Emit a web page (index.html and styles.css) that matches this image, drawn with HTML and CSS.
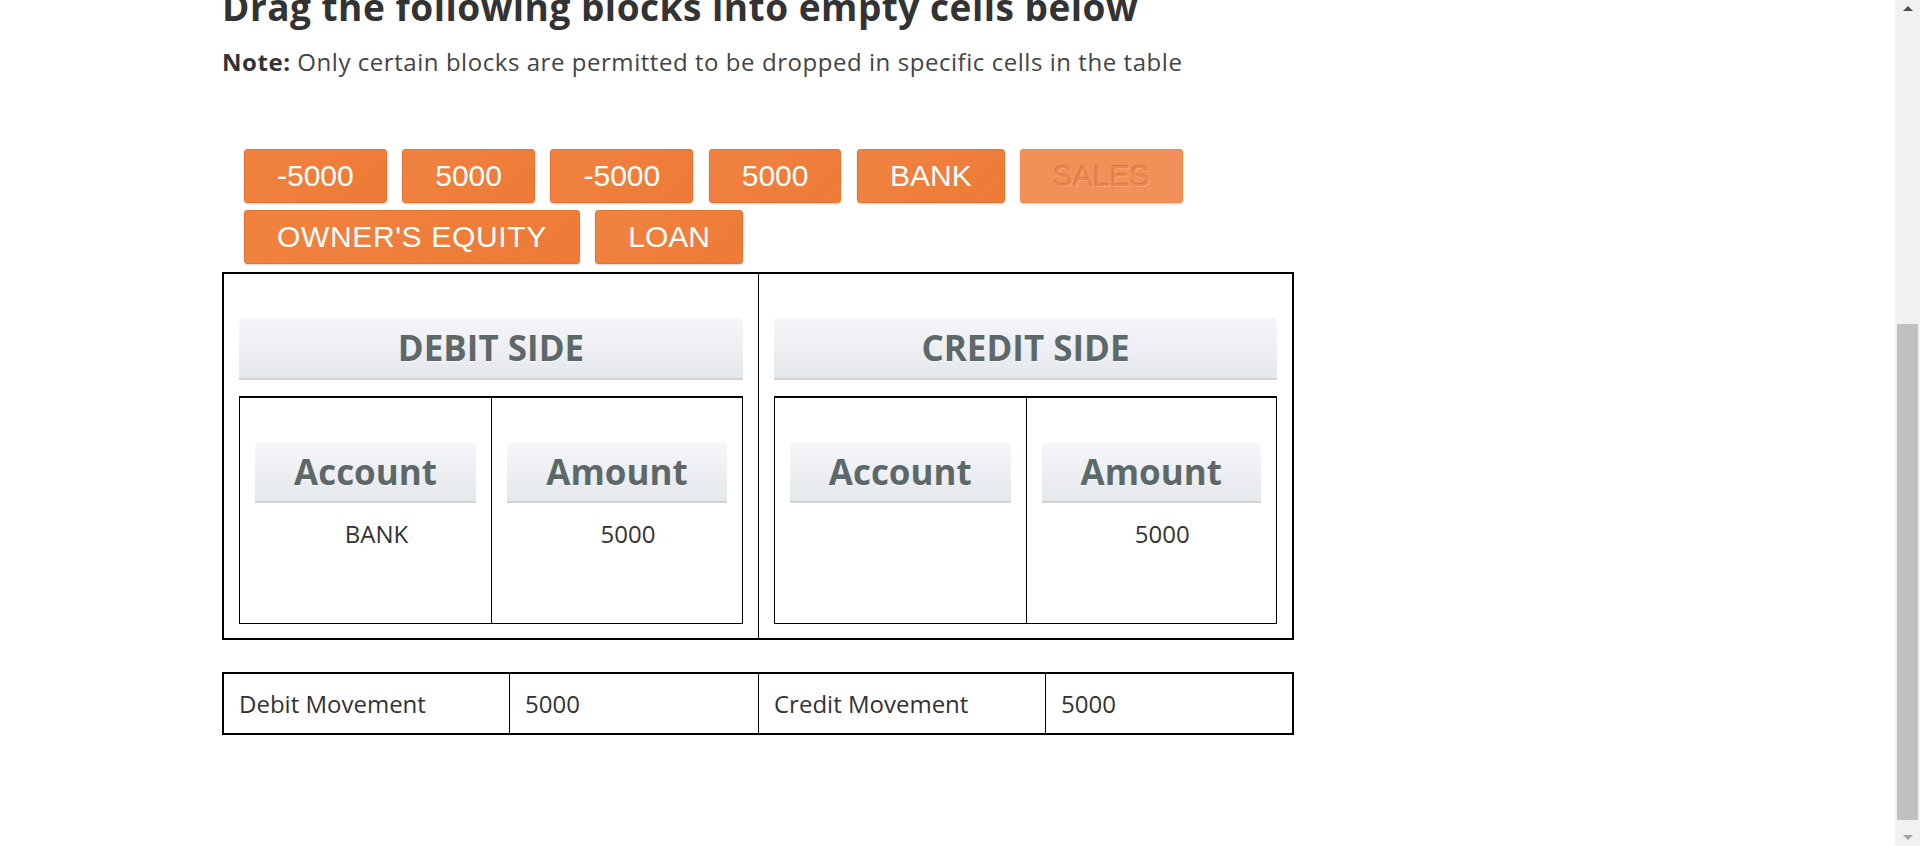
FILE: index.html
```html
<!DOCTYPE html>
<html lang="en">
<head>
<meta charset="utf-8">
<title>Drag and drop – ledger activity</title>
<link rel="stylesheet" href="styles.css">
</head>
<body>
<main class="activity">
  <h2 class="task-title">Drag the following blocks into empty cells below</h2>
  <p class="task-note"><strong>Note:</strong> Only certain blocks are permitted to be dropped in specific cells in the table</p>

  <div class="blocks">
    <span class="block">-5000</span>
    <span class="block">5000</span>
    <span class="block">-5000</span>
    <span class="block">5000</span>
    <span class="block">BANK</span>
    <span class="block block-used">SALES</span>
    <span class="block block-long">OWNER'S EQUITY</span>
    <span class="block">LOAN</span>
  </div>

  <div class="ledger">
    <div class="ledger-side">
      <h3 class="side-title">DEBIT SIDE</h3>
      <div class="entries">
        <div class="entry-col">
          <h4 class="col-title">Account</h4>
          <div class="drop">BANK</div>
        </div>
        <div class="entry-col">
          <h4 class="col-title">Amount</h4>
          <div class="drop">5000</div>
        </div>
      </div>
    </div>
    <div class="ledger-side">
      <h3 class="side-title">CREDIT SIDE</h3>
      <div class="entries">
        <div class="entry-col">
          <h4 class="col-title">Account</h4>
          <div class="drop"></div>
        </div>
        <div class="entry-col">
          <h4 class="col-title">Amount</h4>
          <div class="drop">5000</div>
        </div>
      </div>
    </div>
  </div>

  <div class="totals">
    <div class="total-cell">Debit Movement</div>
    <div class="total-cell">5000</div>
    <div class="total-cell">Credit Movement</div>
    <div class="total-cell">5000</div>
  </div>
</main>

<div class="scrollbar" aria-hidden="true">
  <div class="scroll-btn scroll-up"></div>
  <div class="scroll-track"><div class="scroll-thumb"></div></div>
  <div class="scroll-btn scroll-down"></div>
</div>

<script src="script.js"></script>
</body>
</html>
```

FILE: styles.css
```css
html, body {
  margin: 0;
  padding: 0;
}

body {
  font-family: "Open Sans", "Liberation Sans", sans-serif;
  color: #333;
  background: #fff;
}

.activity {
  width: 1072px;
  padding: 511px 0 126px 222px;
}

.task-title {
  margin: 0;
  font-size: 37px;
  line-height: 40px;
  letter-spacing: 0.5px;
  font-weight: 700;
  color: #333;
}

.task-note {
  margin: 18px 0 0;
  font-size: 24px;
  line-height: 34px;
  letter-spacing: 0.55px;
  color: #444;
}

.task-note strong {
  color: #333;
  font-weight: 700;
}

.blocks {
  display: flex;
  flex-wrap: wrap;
  column-gap: 15.5px;
  row-gap: 7px;
  margin: 70px 0 0 22px;
}

.block {
  font-family: "Liberation Sans", Arial, sans-serif;
  font-size: 30px;
  line-height: 42px;
  padding: 5px 32px;
  border: 1px solid #e6732f;
  border-radius: 3px;
  background: linear-gradient(135deg, #f0823f, #ee7b38);
  color: #fff;
  box-shadow: 0 1px 2px rgba(0, 0, 0, 0.18);
}

.block-long {
  letter-spacing: 0.65px;
}

.block-used {
  background: #f0915a;
  border-color: #ec8a52;
  color: #ec8649;
  text-shadow: -1px -1px 0 rgba(170, 70, 20, 0.35), 1px 1px 0 rgba(255, 215, 185, 0.35);
}

.ledger {
  display: grid;
  grid-template-columns: 1fr 1fr;
  margin-top: 8px;
  border: 2px solid #000;
}

.ledger-side {
  padding: 44px 15px 14px;
}

.ledger-side + .ledger-side {
  border-left: 1px solid #000;
}

.side-title,
.col-title {
  margin: 0;
  text-align: center;
  font-weight: 700;
  color: #5d6969;
  background: linear-gradient(#f5f6f9, #e5e8eb);
  border-bottom: 2px solid #d1d4d7;
  border-radius: 4px 4px 0 0;
  text-shadow: 0 1px 0 rgba(255, 255, 255, 0.7);
}

.side-title {
  margin-bottom: 16px;
  font-size: 35px;
  line-height: 60px;
}

.entries {
  display: grid;
  grid-template-columns: 1fr 1fr;
  box-sizing: border-box;
  height: 228px;
  border: 1px solid #000;
  border-top-width: 2px;
}

.entry-col {
  padding: 45px 15px 0;
}

.entry-col + .entry-col {
  border-left: 1px solid #000;
}

.col-title {
  font-size: 35px;
  line-height: 58px;
}

.drop {
  margin-top: 14px;
  padding-left: 22px;
  min-height: 34px;
  text-align: center;
  font-size: 24px;
  line-height: 34px;
  color: #333;
}

.totals {
  display: grid;
  grid-template-columns: 285px 249px 287px 247px;
  margin-top: 32px;
  border: 2px solid #000;
}

.total-cell {
  padding-left: 15px;
  font-size: 24px;
  line-height: 59px;
  color: #333;
}

.total-cell + .total-cell {
  border-left: 1px solid #000;
}

/* window scrollbar */
.scrollbar {
  position: fixed;
  top: 0;
  right: 0;
  bottom: 0;
  width: 25px;
  display: flex;
  flex-direction: column;
  background: #f1f1f1;
}

.scroll-btn {
  height: 17px;
  display: flex;
  justify-content: center;
  align-items: center;
}

.scroll-btn::before {
  content: "";
  width: 0;
  height: 0;
  border-left: 5.5px solid transparent;
  border-right: 5.5px solid transparent;
}

.scroll-up::before {
  border-bottom: 5px solid #505050;
}

.scroll-down::before {
  border-top: 5px solid #a3a3a3;
}

.scroll-track {
  flex: 1;
  position: relative;
}

.scroll-thumb {
  position: absolute;
  left: 2px;
  right: 2px;
  top: 307px;
  height: 496px;
  background: #c1c1c1;
}
```

FILE: script.js
```js
var doc = document.documentElement;
var title = document.querySelector('.task-title');
var track = document.querySelector('.scroll-track');
var thumb = document.querySelector('.scroll-thumb');

function updateThumb() {
  var trackHeight = track.clientHeight;
  var total = doc.scrollHeight;
  thumb.style.height = (trackHeight * window.innerHeight / total) + 'px';
  thumb.style.top = (trackHeight * window.scrollY / total) + 'px';
}

function showActivity() {
  var top = title.getBoundingClientRect().top + window.scrollY;
  window.scrollTo(0, top + 13);
  updateThumb();
}

showActivity();
window.addEventListener('load', showActivity);
window.addEventListener('scroll', updateThumb);
```
